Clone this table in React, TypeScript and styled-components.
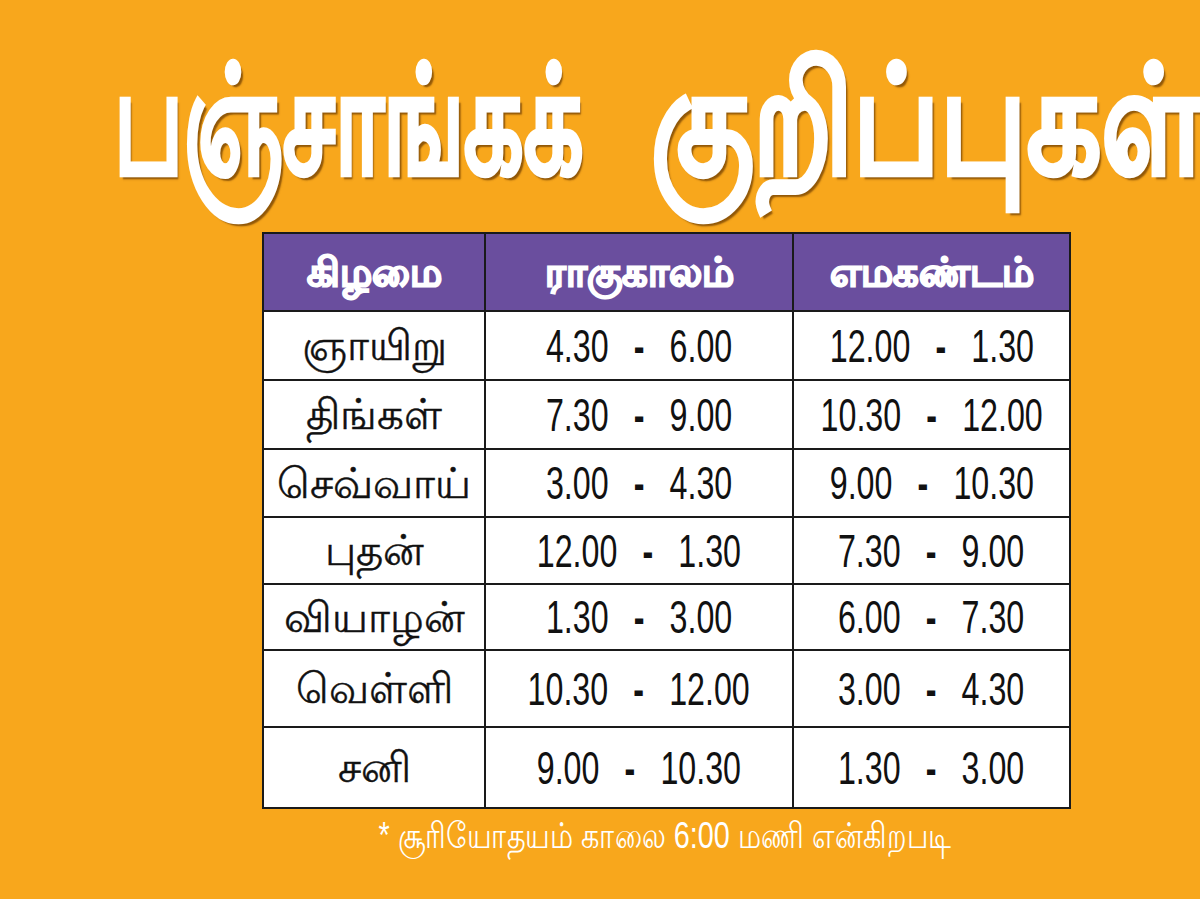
import styled, { createGlobalStyle } from "styled-components";

const GlobalStyle = createGlobalStyle`
  html, body {
    margin: 0;
    padding: 0;
    background: #f8a71c;
  }
`;

const rows = [
  { day: "ஞாயிறு", rahu: ["4.30", "6.00"], yama: ["12.00", "1.30"], h: 69 },
  { day: "திங்கள்", rahu: ["7.30", "9.00"], yama: ["10.30", "12.00"], h: 69 },
  { day: "செவ்வாய்", rahu: ["3.00", "4.30"], yama: ["9.00", "10.30"], h: 68 },
  { day: "புதன்", rahu: ["12.00", "1.30"], yama: ["7.30", "9.00"], h: 67 },
  { day: "வியாழன்", rahu: ["1.30", "3.00"], yama: ["6.00", "7.30"], h: 66 },
  { day: "வெள்ளி", rahu: ["10.30", "12.00"], yama: ["3.00", "4.30"], h: 77 },
  { day: "சனி", rahu: ["9.00", "10.30"], yama: ["1.30", "3.00"], h: 81 },
];

const Time = ({ span }: { span: string[] }) => (
  <Center>
    <Range>
      {span[0]}
      <Dash>-</Dash>
      {span[1]}
    </Range>
  </Center>
);

const App = () => {
  return (
    <>
      <GlobalStyle />
      <Page>
        <Title>
          <TitleWord $sx={0.62} $w={472}>
            பஞ்சாங்கக்
          </TitleWord>
          <TitleWord $sx={0.775} $w={540}>
            குறிப்புகள்
          </TitleWord>
        </Title>
        <Board>
          <Table>
            <colgroup>
              <col style={{ width: 222 }} />
              <col style={{ width: 308 }} />
              <col style={{ width: 277 }} />
            </colgroup>
            <thead>
              <tr>
                <HeadCell>கிழமை</HeadCell>
                <HeadCell>ராகுகாலம்</HeadCell>
                <HeadCell>எமகண்டம்</HeadCell>
              </tr>
            </thead>
            <tbody>
              {rows.map((r) => (
                <Row key={r.day} $h={r.h}>
                  <DayCell>{r.day}</DayCell>
                  <Cell>
                    <Time span={r.rahu} />
                  </Cell>
                  <Cell>
                    <Time span={r.yama} />
                  </Cell>
                </Row>
              ))}
            </tbody>
          </Table>
          <Note>
            <NoteText>* சூரியோதயம் காலை 6:00 மணி என்கிறபடி</NoteText>
          </Note>
        </Board>
      </Page>
    </>
  );
};

export default App;

const Page = styled.div`
  width: 1200px;
  height: 899px;
  overflow: hidden;
  background: #f8a71c;
  font-family: "Noto Sans", "Liberation Sans", sans-serif;
`;

const Title = styled.h1`
  display: flex;
  gap: 65px;
  margin: 0;
  height: 232px;
  box-sizing: border-box;
  padding: 40px 0 0 114px;
  white-space: nowrap;
  font-size: 150px;
  font-weight: 700;
  line-height: 1;
  color: #fff;
`;

const TitleWord = styled.span<{ $sx: number; $w: number }>`
  flex: 0 0 ${(p) => p.$w}px;
  min-width: 0;
  width: ${(p) => p.$w}px;
  display: inline-block;
  transform: scaleX(${(p) => p.$sx});
  transform-origin: left center;
  -webkit-text-stroke: 4px #fff;
  text-shadow: 4px 4px 2px rgba(110, 60, 0, 0.75);
`;

const Board = styled.div`
  margin-left: 262px;
  width: 807px;
`;

const Table = styled.table`
  width: 807px;
  border-collapse: collapse;
  table-layout: fixed;
  background: #fff;
`;

const HeadCell = styled.th`
  height: 76px;
  padding: 0;
  background: #6a4e9e;
  border: 2px solid #1a1a1a;
  color: #fff;
  font-size: 40px;
  font-weight: 700;
  -webkit-text-stroke: 1.8px #fff;
  text-align: center;
  vertical-align: middle;
`;

const Row = styled.tr<{ $h: number }>`
  height: ${(p) => p.$h}px;
`;

const Cell = styled.td`
  padding: 0;
  border: 2px solid #1a1a1a;
  text-align: center;
  vertical-align: middle;
  color: #111;
  overflow: hidden;
`;

const DayCell = styled(Cell)`
  font-size: 42px;
  -webkit-text-stroke: 0.4px #111;
`;

const Center = styled.div`
  display: flex;
  justify-content: center;
`;

const Range = styled.span`
  flex: none;
  display: inline-block;
  font-family: "Liberation Sans", sans-serif;
  font-size: 46px;
  transform: scaleX(0.7);
  white-space: nowrap;
`;

const Dash = styled.span`
  padding: 0 0.78em;
  font-weight: 700;
`;

const Note = styled.div`
  margin-top: 6px;
  text-align: center;
  color: #fff;
  font-family: "Liberation Sans", "Noto Sans", sans-serif;
  font-size: 36px;
`;

const NoteText = styled.span`
  display: inline-block;
  white-space: nowrap;
  transform: scaleX(0.8);
`;
